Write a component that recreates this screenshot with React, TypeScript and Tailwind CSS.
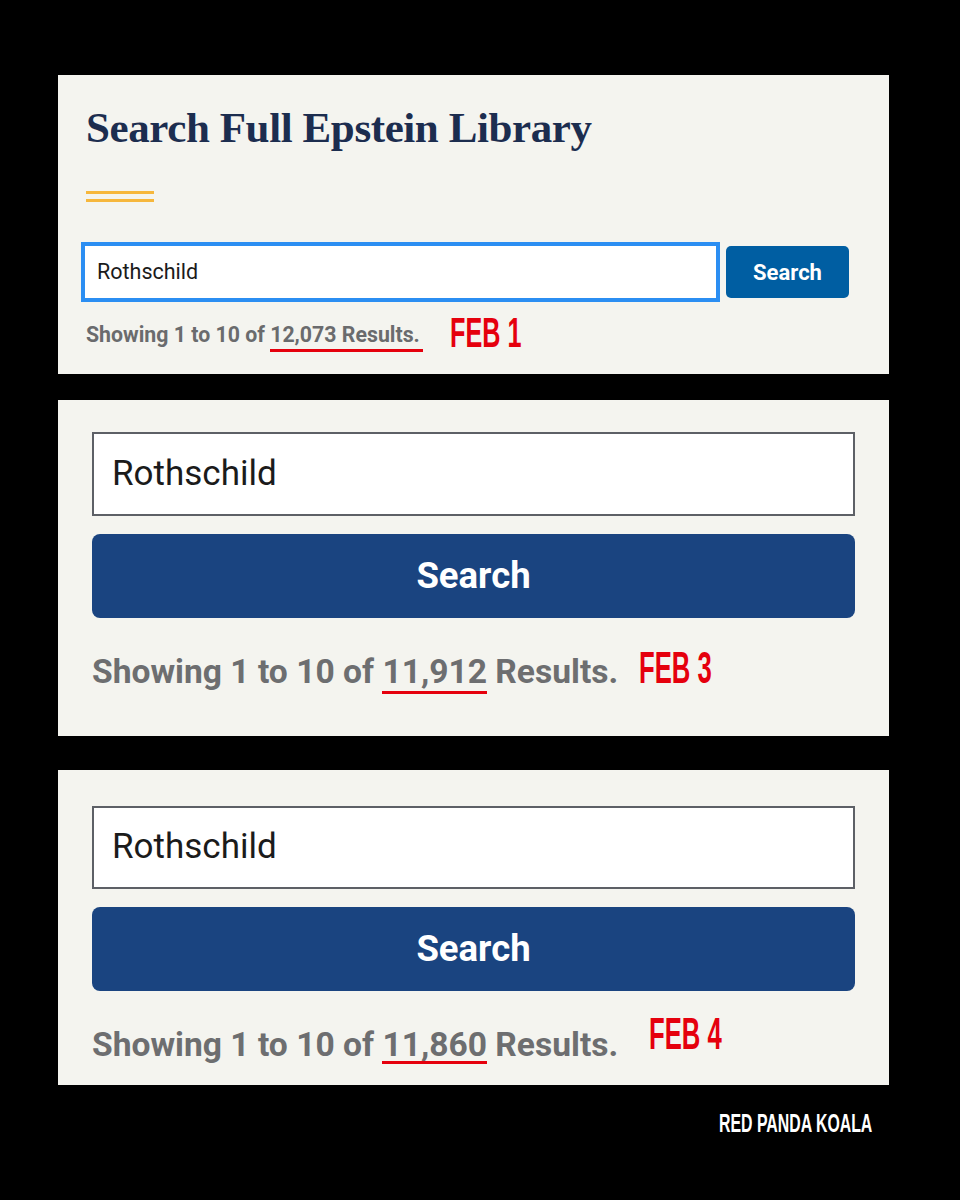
import React from "react";

const sans = "font-['Roboto','Liberation_Sans',sans-serif]";

function Feb({ label, className }: { label: string; className: string }) {
  return (
    <span
      className={`inline-block origin-left whitespace-nowrap font-['Liberation_Sans',sans-serif] font-bold text-[#e5000d] ${className}`}
    >
      {label}
    </span>
  );
}

export default function App() {
  return (
    <div className="w-[960px] h-[1200px] bg-black flex flex-col pt-[75px] pl-[58px]">
      {/* Panel 1 */}
      <div className="w-[831px] h-[299px] bg-[#f4f4ef] pl-[23px] flex flex-col">
        <h1 className="mt-[29px] ml-[5px] font-['Liberation_Serif',serif] font-bold text-[43px] leading-[48px] text-[#1c2d4f] tracking-[-0.4px]">
          Search Full Epstein Library
        </h1>
        <div className="mt-[39px] ml-[5px] w-[68px] flex flex-col gap-[5px]">
          <div className="h-[3px] bg-[#f6b73c]" />
          <div className="h-[3px] bg-[#f6b73c]" />
        </div>
        <div className="mt-[40px] flex items-center gap-[6px]">
          <div className="w-[639px] h-[60px] border-4 border-[#2b8ef2] bg-white flex items-center pl-[12px]">
            <span className={`${sans} text-[21.5px] text-[#1b1b1b]`}>Rothschild</span>
          </div>
          <div className="w-[123px] h-[52px] rounded-[5px] bg-[#005ea2] flex items-center justify-center">
            <span className={`${sans} font-bold text-[22px] text-white`}>Search</span>
          </div>
        </div>
        <div className="mt-[6px] ml-[5px] flex items-baseline">
          <span className={`${sans} font-bold text-[21.3px] leading-[28px] text-[#6a6b6d] whitespace-nowrap`}>
            Showing 1 to 10 of{" "}
            <span className="relative inline-block">
              12,073 Results.
              <span className="absolute left-0 right-[-3px] top-[28px] h-[3px] bg-[#e5000d]" />
            </span>
          </span>
          <Feb label="FEB 1" className="ml-[30px] text-[42px] leading-[40px] scale-x-[0.6] translate-y-[5px]" />
        </div>
      </div>

      {/* Panel 2 */}
      <div className="mt-[26px] w-[831px] h-[336px] bg-[#f4f4ef] pl-[34px] flex flex-col">
        <div className="mt-[32px] w-[763px] h-[84px] border-2 border-[#5d6066] bg-white flex items-center pl-[18px]">
          <span className={`${sans} text-[35px] text-[#1b1b1b]`}>Rothschild</span>
        </div>
        <div className="mt-[18px] w-[763px] h-[84px] rounded-[8px] bg-[#1a4480] flex items-center justify-center">
          <span className={`${sans} font-bold text-[36.5px] text-white`}>Search</span>
        </div>
        <div className="mt-[30px] flex items-baseline">
          <span className={`${sans} font-bold text-[33.6px] leading-[40px] text-[#6d6e70] whitespace-nowrap`}>
            Showing 1 to 10 of{" "}
            <span className="relative inline-block">
              11,912
              <span className="absolute left-0 right-0 top-[39px] h-[3px] bg-[#e5000d]" />
            </span>{" "}
            Results.
          </span>
          <Feb label="FEB 3" className="ml-[21px] text-[45px] leading-[40px] scale-x-[0.57]" />
        </div>
      </div>

      {/* Panel 3 */}
      <div className="mt-[34px] w-[831px] h-[315px] bg-[#f4f4ef] pl-[34px] flex flex-col">
        <div className="mt-[36px] w-[763px] h-[83px] border-2 border-[#5d6066] bg-white flex items-center pl-[18px]">
          <span className={`${sans} text-[35px] text-[#1b1b1b]`}>Rothschild</span>
        </div>
        <div className="mt-[18px] w-[763px] h-[84px] rounded-[8px] bg-[#1a4480] flex items-center justify-center">
          <span className={`${sans} font-bold text-[36.5px] text-white`}>Search</span>
        </div>
        <div className="mt-[30px] flex items-baseline">
          <span className={`${sans} font-bold text-[33.6px] leading-[40px] text-[#6d6e70] whitespace-nowrap`}>
            Showing 1 to 10 of{" "}
            <span className="relative inline-block">
              11,860
              <span className="absolute left-0 right-0 top-[36px] h-[3px] bg-[#e5000d]" />
            </span>{" "}
            Results.
          </span>
          <Feb label="FEB 4" className="ml-[31px] text-[45px] leading-[40px] scale-x-[0.57] -translate-y-[7px]" />
        </div>
      </div>

      <div className="mt-[23px] ml-[661px] font-['Liberation_Sans',sans-serif] font-bold text-[26px] leading-[30px] text-white whitespace-nowrap origin-left scale-x-[0.61]">
        RED PANDA KOALA
      </div>
    </div>
  );
}
